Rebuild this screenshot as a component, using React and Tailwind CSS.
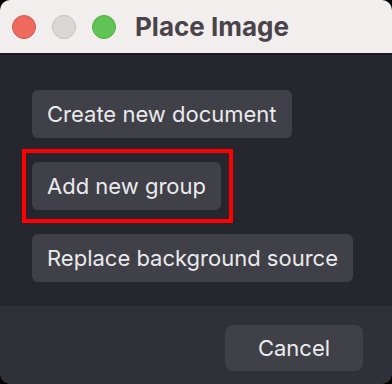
import React from 'react';

const font = { fontFamily: 'Inter, "Noto Sans", sans-serif' };

const OptionButton = ({ children, highlighted }) => (
  <div className="relative self-start">
    {highlighted && (
      <span className="pointer-events-none absolute -left-[10px] -right-[12px] -top-[13px] -bottom-[13px] border-4 border-[#ff0000]" />
    )}
    <button className="h-12 rounded-md bg-[#404048] px-[15px] text-[22px] text-[#ebebed] leading-none">
      {children}
    </button>
  </div>
);

export default function App() {
  return (
    <div className="w-[392px] h-[384px] bg-black" style={font}>
      <div className="flex h-full w-full flex-col overflow-hidden rounded-[10px]">
        {/* title bar */}
        <div className="flex h-[55px] shrink-0 items-center border-b-2 border-[#18181d] bg-[#f3eeee] pl-3">
          <div className="flex gap-4">
            <span className="h-6 w-6 rounded-full border border-[#d9574e] bg-[#ee6a5f]" />
            <span className="h-6 w-6 rounded-full border border-[#c4bfbf] bg-[#dcd7d7]" />
            <span className="h-6 w-6 rounded-full border border-[#4fae44] bg-[#5fc454]" />
          </div>
          <h1 className="ml-[19px] text-[26px] font-bold text-[#49444a]">Place Image</h1>
        </div>

        {/* options */}
        <div className="flex h-[251px] shrink-0 flex-col gap-6 bg-[#26262e] pl-8 pt-[35px]">
          <OptionButton>Create new document</OptionButton>
          <OptionButton highlighted>Add new group</OptionButton>
          <OptionButton>Replace background source</OptionButton>
        </div>

        {/* footer */}
        <div className="flex flex-1 items-start justify-end bg-[#303038] pr-[29px] pt-[19px]">
          <button className="h-[46px] w-[138px] rounded-lg bg-[#404048] text-[22px] text-[#ebebed]">
            Cancel
          </button>
        </div>
      </div>
    </div>
  );
}
